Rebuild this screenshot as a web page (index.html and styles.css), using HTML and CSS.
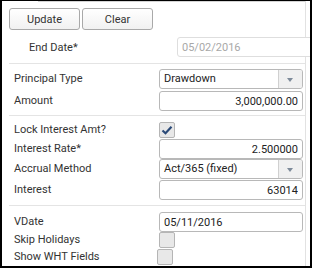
FILE: index.html
```html
<!DOCTYPE html>
<html lang="en">
<head>
    <meta charset="UTF-8">
    <title>Deal Details</title>
    <link rel="stylesheet" href="styles.css">
</head>
<body>
    <div class="frame">
        <div class="panel">
            <div class="topline"></div>
            <div class="actions">
                <button class="btn">Update</button>
                <button class="btn">Clear</button>
            </div>
            <div class="end-row">
                <span class="end-label">End Date*</span>
                <input class="input disabled" type="text" value="05/02/2016" readonly>
            </div>
            <div class="sep"></div>

            <div class="form first">
                <label>Principal Type</label>
                <div class="select"><span>Drawdown</span><span class="arrow"></span></div>
                <label>Amount</label>
                <input class="input num" type="text" value="3,000,000.00">
            </div>
            <div class="sep"></div>

            <div class="form second">
                <label>Lock Interest Amt?</label>
                <div><span class="check on">
                    <svg width="12" height="10" viewBox="0 0 12 10"><path d="M1.5 5.5 L4.5 8.2 L10.5 1.8" fill="none" stroke="#2b4a78" stroke-width="2.2"/></svg>
                </span></div>
                <label>Interest Rate*</label>
                <input class="input num" type="text" value="2.500000">
                <label>Accrual Method</label>
                <div class="select"><span>Act/365 (fixed)</span><span class="arrow"></span></div>
                <label>Interest</label>
                <input class="input num" type="text" value="63014">
            </div>
            <div class="sep"></div>

            <div class="form third">
                <label>VDate</label>
                <input class="input" type="text" value="05/11/2016">
                <label>Skip Holidays</label>
                <div><span class="check"></span></div>
                <label>Show WHT Fields</label>
                <div><span class="check shift"></span></div>
            </div>
        </div>
    </div>
</body>
</html>
```

FILE: styles.css
```css
body {
    margin: 0;
    font-family: Roboto, 'Liberation Sans', sans-serif;
    font-size: 11px;
    color: #333;
    background: #fff;
}
.frame {
    width: 312px;
    height: 268px;
    box-sizing: border-box;
    border: 2px solid #000;
    border-top-width: 1px;
    overflow: hidden;
}
.panel {
    width: 303px;
    height: 100%;
    border-right: 1px solid #e2e2e2;
}
.topline {
    height: 1px;
    margin-left: 36px;
    background: #d4d4d4;
}
.actions {
    display: flex;
    gap: 2px;
    padding: 6px 0 0 7px;
}
.btn {
    width: 71px;
    height: 22px;
    border: 1px solid #a9a9a9;
    border-radius: 3px;
    background: linear-gradient(#ffffff, #f1f1f1);
    font-family: inherit;
    font-size: 11px;
    color: #333;
    padding: 0;
}
.end-row {
    display: flex;
    align-items: center;
    height: 22px;
    margin: 6px 0 5px;
}
.end-label {
    flex-shrink: 0;
    width: 148px;
    padding-left: 27px;
}
.input {
    height: 20px;
    box-sizing: border-box;
    border: 1px solid #b8b8b8;
    border-radius: 3px;
    padding: 0 4px;
    font-family: inherit;
    font-size: 11px;
    color: #222;
    background: #fff;
    width: 144px;
    margin: 0;
    outline: none;
}
.input.disabled {
    flex-shrink: 0;
    width: 140px;
    color: #a8a8a8;
    border-color: #dedede;
}
.input.num {
    text-align: right;
}
.sep {
    height: 1px;
    margin-left: 7px;
    background: #e4e4e4;
}
.form {
    display: grid;
    grid-template-columns: 145px 144px;
    align-items: center;
    padding-left: 12px;
}
.form label {
    height: 20px;
    line-height: 20px;
}
.first {
    row-gap: 2px;
    padding-top: 5px;
    padding-bottom: 4px;
}
.second {
    padding-top: 4px;
    padding-bottom: 5px;
}
.second label:first-child {
    height: 19px;
    line-height: 19px;
}
.second label:last-of-type {
    margin-top: 1px;
}
.second input:last-child {
    margin-top: 1px;
}
.third {
    padding-top: 6px;
}
.third label:nth-of-type(2) {
    height: 16px;
    line-height: 16px;
}
.third label:nth-of-type(3) {
    height: 18px;
    line-height: 18px;
}
.select {
    display: flex;
    height: 20px;
    box-sizing: border-box;
    border: 1px solid #b8b8b8;
    border-radius: 3px;
    background: #fff;
    color: #222;
    overflow: hidden;
}
.select span:first-child {
    flex: 1;
    padding-left: 4px;
    line-height: 18px;
}
.arrow {
    width: 23px;
    border-left: 1px solid #d0d0d0;
    background: #f0f0f0;
    position: relative;
}
.arrow::after {
    content: '';
    position: absolute;
    left: 8px;
    top: 8px;
    border-left: 3.5px solid transparent;
    border-right: 3.5px solid transparent;
    border-top: 4px solid #7d8a99;
}
.check {
    display: flex;
    align-items: center;
    justify-content: center;
    width: 16px;
    height: 16px;
    box-sizing: border-box;
    border: 1px solid #b5b5b5;
    border-radius: 2px;
    background: #e8e8e8;
}
.check.shift {
    margin-left: -2px;
}
```
